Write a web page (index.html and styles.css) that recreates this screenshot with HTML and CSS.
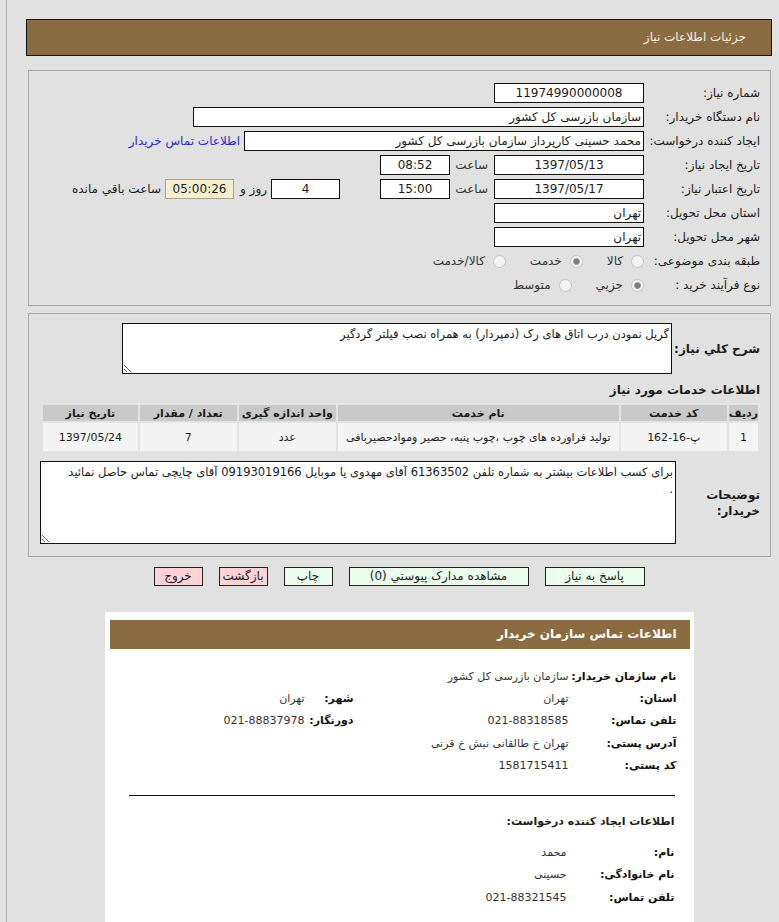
FILE: index.html
```html
<!DOCTYPE html>
<html lang="fa">
<head>
    <meta charset="UTF-8">
    <meta name="viewport" content="width=device-width, initial-scale=1.0">
    <title>جزئیات اطلاعات نیاز</title>
    <link rel="stylesheet" href="styles.css">
</head>
<body>
    <div class="page" dir="rtl">
        <div class="page_title">جزئیات اطلاعات نیاز</div>

        <!-- مشخصات نیاز -->
        <div class="panel info_panel">
            <div class="form_row">
                <span class="form_label">شماره نیاز:</span>
                <span class="field field_center w150">11974990000008</span>
            </div>
            <div class="form_row">
                <span class="form_label">نام دستگاه خریدار:</span>
                <span class="field w451">سازمان بازرسی کل کشور</span>
            </div>
            <div class="form_row">
                <span class="form_label">ایجاد کننده درخواست:</span>
                <span class="field w400">محمد حسینی کارپرداز سازمان بازرسی کل کشور</span>
                <a class="contact_link" href="#">اطلاعات تماس خریدار</a>
            </div>
            <div class="form_row">
                <span class="form_label">تاریخ ایجاد نیاز:</span>
                <span class="field field_center w150">1397/05/13</span>
                <span class="time_label">ساعت</span>
                <span class="field field_center w70">08:52</span>
            </div>
            <div class="form_row">
                <span class="form_label">تاریخ اعتبار نیاز:</span>
                <span class="field field_center w150">1397/05/17</span>
                <span class="time_label">ساعت</span>
                <span class="field field_center w70">15:00</span>
                <span class="field field_center w69 days_field">4</span>
                <span class="day_text">روز و</span>
                <span class="field field_center w69 timer_field">05:00:26</span>
                <span class="remain_text">ساعت باقي مانده</span>
            </div>
            <div class="form_row">
                <span class="form_label">استان محل تحویل:</span>
                <span class="field w150">تهران</span>
            </div>
            <div class="form_row">
                <span class="form_label">شهر محل تحویل:</span>
                <span class="field w150">تهران</span>
            </div>
            <div class="form_row">
                <span class="form_label">طبقه بندی موضوعی:</span>
                <span class="radio_group">
                    <span class="radio_item"><span class="radio"></span>کالا</span>
                    <span class="radio_item"><span class="radio radio_checked"></span>خدمت</span>
                    <span class="radio_item"><span class="radio"></span>کالا/خدمت</span>
                </span>
            </div>
            <div class="form_row">
                <span class="form_label">نوع فرآیند خرید :</span>
                <span class="radio_group">
                    <span class="radio_item"><span class="radio radio_checked"></span>جزیي</span>
                    <span class="radio_item"><span class="radio"></span>متوسط</span>
                </span>
            </div>
        </div>

        <!-- شرح و اقلام -->
        <div class="panel detail_panel">
            <div class="desc_row">
                <span class="desc_label">شرح کلي نياز:</span>
                <textarea class="desc_text desc_short" readonly>گریل نمودن درب اتاق های رک (دمپردار) به همراه نصب فیلتر گردگیر</textarea>
            </div>
            <div class="section_title">اطلاعات خدمات مورد نياز</div>
            <table class="item_table">
                <thead>
                    <tr>
                        <th class="col_row">ردیف</th>
                        <th class="col_code">کد خدمت</th>
                        <th class="col_name">نام خدمت</th>
                        <th class="col_unit">واحد اندازه گیری</th>
                        <th class="col_qty">تعداد / مقدار</th>
                        <th class="col_date">تاریخ نیاز</th>
                    </tr>
                </thead>
                <tbody>
                    <tr>
                        <td>1</td>
                        <td>پ-16-162</td>
                        <td>تولید فراورده های چوب ،چوب پنبه، حصیر وموادحصیربافی</td>
                        <td>عدد</td>
                        <td>7</td>
                        <td>1397/05/24</td>
                    </tr>
                </tbody>
            </table>
            <div class="desc_row notes_row">
                <span class="desc_label notes_label">توضیحات<br>خریدار:</span>
                <textarea class="desc_text desc_long" readonly>برای کسب اطلاعات بیشتر به شماره تلفن 61363502 آقای مهدوی یا موبایل 09193019166 آقای چایچی تماس حاصل نمائید
.</textarea>
            </div>
        </div>

        <div class="actions">
            <button class="btn w100">پاسخ به نیاز</button>
            <button class="btn w180">مشاهده مدارک پیوستي (0)</button>
            <button class="btn w49">چاپ</button>
            <button class="btn btn_red w49">بازگشت</button>
            <button class="btn btn_red w49">خروج</button>
        </div>

        <!-- اطلاعات تماس -->
        <div class="contact_card">
            <div class="card_title">اطلاعات تماس سازمان خریدار</div>
            <div class="contact_grid">
                <span class="c_label">نام سازمان خریدار:</span>
                <span class="c_value c_wide">سازمان بازرسی کل کشور</span>

                <span class="c_label">استان:</span>
                <span class="c_value">تهران</span>
                <span class="c_label">شهر:</span>
                <span class="c_value">تهران</span>

                <span class="c_label">تلفن تماس:</span>
                <span class="c_value">021-88318585</span>
                <span class="c_label">دورنگار:</span>
                <span class="c_value">021-88837978</span>

                <span class="c_label">آدرس پستی:</span>
                <span class="c_value c_wide">تهران خ طالقانی نبش خ قرنی</span>

                <span class="c_label">کد پستی:</span>
                <span class="c_value c_wide">1581715411</span>
            </div>
            <div class="card_line"></div>
            <div class="sub_title">اطلاعات ایجاد کننده درخواست:</div>
            <div class="contact_grid creator_grid">
                <span class="c_label">نام:</span>
                <span class="c_value c_wide">محمد</span>

                <span class="c_label">نام خانوادگی:</span>
                <span class="c_value c_wide">حسینی</span>

                <span class="c_label">تلفن تماس:</span>
                <span class="c_value c_wide">021-88321545</span>
            </div>
        </div>
    </div>
</body>
</html>
```

FILE: styles.css
```css
html,body{
    margin:0;
    padding:0;
    background:#e1e1e1;
}
body{
    font-family:Tahoma, "DejaVu Sans", sans-serif;
    font-size:12px;
    color:#1c1c1c;
}
.page{
    box-sizing:border-box;
    height:922px;
    overflow:hidden;
    margin-left:6px;
    padding:19px 7px 0 19px;
    border-left:1px solid #b4b4b4;
}
.page_title{
    height:35px;
    line-height:35px;
    padding-right:25px;
    border:1px solid #1b140b;
    background:#8b6b41;
    color:#f3efe6;
}
.panel{
    margin:0 1px 0 2px;
    border:1px solid #a9a9a9;
}
.info_panel{
    margin-top:14px;
    padding:10px 10px 8px 10px;
}
.form_row{
    display:flex;
    align-items:center;
    height:24px;
    white-space:nowrap;
}
.form_label{
    flex-shrink:0;
    width:116px;
}
.field{
    box-sizing:border-box;
    flex-shrink:0;
    height:20px;
    line-height:18px;
    padding:0 2px;
    border:1px solid #111;
    background:#fff;
    white-space:nowrap;
    overflow:hidden;
}
.field_center{
    text-align:center;
}
.w150{ width:150px; }
.w451{ width:451px; }
.w400{ width:400px; }
.w70{ width:70px; }
.w69{ width:69px; }
.contact_link{
    margin-right:4px;
    color:#2b2bc4;
    text-decoration:none;
}
.time_label{
    box-sizing:border-box;
    width:44px;
    padding-right:6px;
    color:#333;
}
.days_field{
    margin-right:40px;
}
.day_text{
    margin-right:4px;
}
.timer_field{
    margin-right:6px;
    border-color:#aaa58c;
    background:#f3efcf;
}
.remain_text{
    margin-right:4px;
}
.radio_group{
    display:flex;
    align-items:center;
}
.radio_item{
    display:flex;
    align-items:center;
    margin-left:24px;
    color:#333;
}
.radio{
    display:flex;
    align-items:center;
    justify-content:center;
    box-sizing:border-box;
    width:13px;
    height:13px;
    margin-left:8px;
    border:1px solid #c4c4c4;
    border-radius:50%;
    background:#f3f3f3;
}
.radio_checked::after{
    content:'';
    width:5px;
    height:5px;
    border:1px solid #9a9a9a;
    border-radius:50%;
    background:#7a7a7a;
}
/* 
    شرح نیاز و جدول
*/
.detail_panel{
    margin-top:7px;
    padding:9px 10px 12px 10px;
}
.desc_row{
    display:flex;
    align-items:center;
}
.desc_label{
    flex-shrink:0;
    width:88px;
    font-size:12px;
    font-weight:bold;
    line-height:16px;
    white-space:nowrap;
}
.desc_text{
    box-sizing:border-box;
    margin:0;
    padding:2px 2px 1px;
    border:1px solid #111;
    background:#fff;
    color:#1c1c1c;
    font-family:Tahoma, "DejaVu Sans", sans-serif;
    font-size:11.5px;
    line-height:17px;
    direction:rtl;
}
.desc_short{
    width:550px;
    height:51px;
}
.section_title{
    margin-top:8px;
    font-size:12px;
    font-weight:bold;
    line-height:16px;
}
.item_table{
    width:719px;
    margin-top:5px;
    border:1px solid #c2c2c2;
    border-collapse:collapse;
    background:#f4f4f4;
    font-size:11px;
    white-space:nowrap;
}
.item_table th,
.item_table td{
    padding:0;
    border:2px solid #e3e3e3;
    text-align:center;
}
.item_table th{
    height:16px;
    background:#c9c9c9;
    font-weight:bold;
}
.item_table td{
    height:28px;
}
.col_row{ width:24px; }
.col_code{ width:106px; }
.col_name{ width:281px; }
.col_unit{ width:97px; }
.col_qty{ width:97px; }
.notes_row{
    margin-top:8px;
}
.notes_label{
    width:84px;
}
.desc_long{
    width:636px;
    height:83px;
}
.actions{
    display:flex;
    justify-content:center;
    gap:16px;
    margin-top:10px;
}
.btn{
    box-sizing:border-box;
    height:19px;
    padding:0;
    border:1px solid #222;
    background:#ecffec;
    color:#1c1c1c;
    font-family:Tahoma, "DejaVu Sans", sans-serif;
    font-size:12px;
    line-height:17px;
}
.btn_red{
    background:#ffd3d6;
}
.w100{ width:100px; }
.w180{ width:180px; }
.w49{ width:49px; }
/* 
    اطلاعات تماس
*/
.contact_card{
    width:589px;
    margin:26px auto 0;
    padding:8px 4px 30px 5px;
    box-sizing:border-box;
    background:#fff;
}
.card_title{
    height:29px;
    line-height:29px;
    padding-right:13px;
    background:#8b6b41;
    color:#fff;
    font-weight:bold;
}
.contact_grid{
    display:grid;
    grid-template-columns:108px 215px 49px 1fr;
    grid-auto-rows:22.3px;
    align-items:center;
    padding:16px 13px 0 0;
    white-space:nowrap;
}
.c_label{
    font-size:11px;
    font-weight:bold;
    color:#111;
}
.c_value{
    font-size:11px;
    color:#333;
}
.c_wide{
    grid-column:span 3;
}
.card_line{
    margin:19px 15px 0 19px;
    border-top:1px solid #111;
}
.sub_title{
    margin-top:18px;
    padding-right:15px;
    font-size:11px;
    font-weight:bold;
    line-height:16px;
}
.creator_grid{
    padding-top:11px;
    padding-right:15px;
}
```
